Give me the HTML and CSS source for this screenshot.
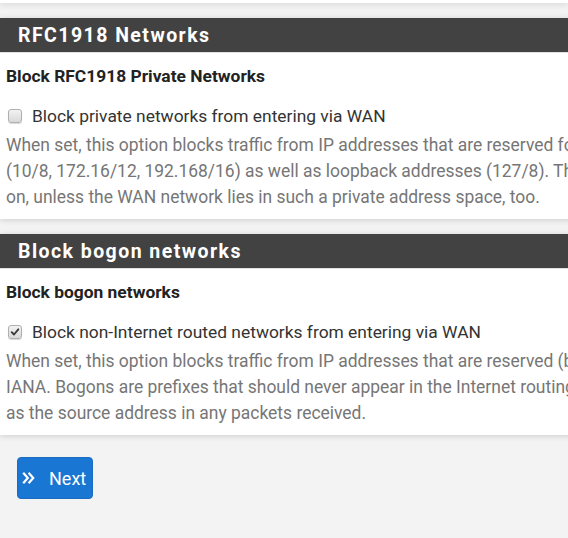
FILE: index.html
```html
<!DOCTYPE html>
<html>
<head>
<meta charset="utf-8">
<link rel="stylesheet" href="styles.css">
</head>
<body>
<div class="prev-panel"></div>

<section class="panel">
  <h2 class="panel-heading">RFC1918 Networks</h2>
  <div class="panel-body">
    <div class="field-title">Block RFC1918 Private Networks</div>
    <label class="check-row">
      <span class="checkbox"></span>
      <span>Block private networks from entering via WAN</span>
    </label>
    <div class="help">
      <div>When set, this option blocks traffic from IP addresses that are reserved for private networks per RFC 1918</div>
      <div>(10/8, 172.16/12, 192.168/16) as well as loopback addresses (127/8). This option should generally be turned</div>
      <div>on, unless the WAN network lies in such a private address space, too.</div>
    </div>
  </div>
</section>

<section class="panel">
  <h2 class="panel-heading">Block bogon networks</h2>
  <div class="panel-body">
    <div class="field-title">Block bogon networks</div>
    <label class="check-row">
      <span class="checkbox checked"><svg viewBox="0 0 12 12" width="10" height="10"><path d="M2 6.2 L4.8 9 L10 2.8" fill="none" stroke="#3a3a3a" stroke-width="2.2" stroke-linecap="round" stroke-linejoin="round"/></svg></span>
      <span>Block non-Internet routed networks from entering via WAN</span>
    </label>
    <div class="help">
      <div>When set, this option blocks traffic from IP addresses that are reserved (but not RFC 1918) or not yet assigned by</div>
      <div>IANA. Bogons are prefixes that should never appear in the Internet routing table, and so should not appear</div>
      <div>as the source address in any packets received.</div>
    </div>
  </div>
</section>

<div class="actions">
  <button class="btn-next"><svg class="icon" viewBox="0 0 13 14" width="13" height="14"><path d="M1.2 1.8 L5.8 7 L1.2 12.2 M6.6 1.8 L11.2 7 L6.6 12.2" fill="none" stroke="#fff" stroke-width="2.2"/></svg><span>Next</span></button>
</div>
</body>
</html>
```

FILE: styles.css
```css
html, body {
  margin: 0;
  padding: 0;
  background: #f3f3f3;
  font-family: Roboto, "Liberation Sans", sans-serif;
  overflow: hidden;
}

body {
  width: 568px;
  height: 538px;
}

.prev-panel {
  height: 3px;
  background: #fff;
  box-shadow: 0 1px 6px rgba(0, 0, 0, 0.18);
  margin-bottom: 15px;
}

.panel {
  background: #fff;
  box-shadow: 0 1px 6px rgba(0, 0, 0, 0.16);
  margin-bottom: 15px;
  width: 1000px;
}

.panel-heading {
  margin: 0;
  height: 35px;
  line-height: 35px;
  background: #424242;
  color: #fff;
  font-size: 19.5px;
  font-weight: 700;
  letter-spacing: 1.45px;
  padding-left: 18px;
  border-bottom: 1px solid #e0e0e0;
  box-sizing: border-box;
}

.panel-body {
  padding: 11px 6px 9px;
}

.field-title {
  font-size: 17.4px;
  font-weight: 700;
  line-height: 24px;
  color: #222;
}

.check-row {
  display: flex;
  align-items: center;
  gap: 10px;
  margin-top: 16px;
  padding-left: 2px;
  font-size: 17.4px;
  line-height: 24px;
  color: #333;
}

.checkbox {
  width: 12px;
  height: 12px;
  border: 1px solid #b0b0b0;
  border-radius: 3px;
  background: linear-gradient(#f2f2f2, #d9d9d9);
  box-shadow: 0 1px 1px rgba(0, 0, 0, 0.15);
  display: flex;
  align-items: center;
  justify-content: center;
}

.help {
  margin-top: 4px;
  font-size: 17.45px;
  line-height: 26px;
  color: #767676;
  white-space: nowrap;
}

.actions {
  padding: 7px 17px;
}

.btn-next {
  display: flex;
  align-items: center;
  gap: 14px;
  height: 42px;
  width: 76px;
  padding: 0 0 0 4px;
  border: 1px solid #1b6cc0;
  border-radius: 4px;
  background: #1976d2;
  color: #fff;
  font-family: Roboto, "Liberation Sans", sans-serif;
  font-size: 18px;
}

.icon {
  flex: none;
}
```
